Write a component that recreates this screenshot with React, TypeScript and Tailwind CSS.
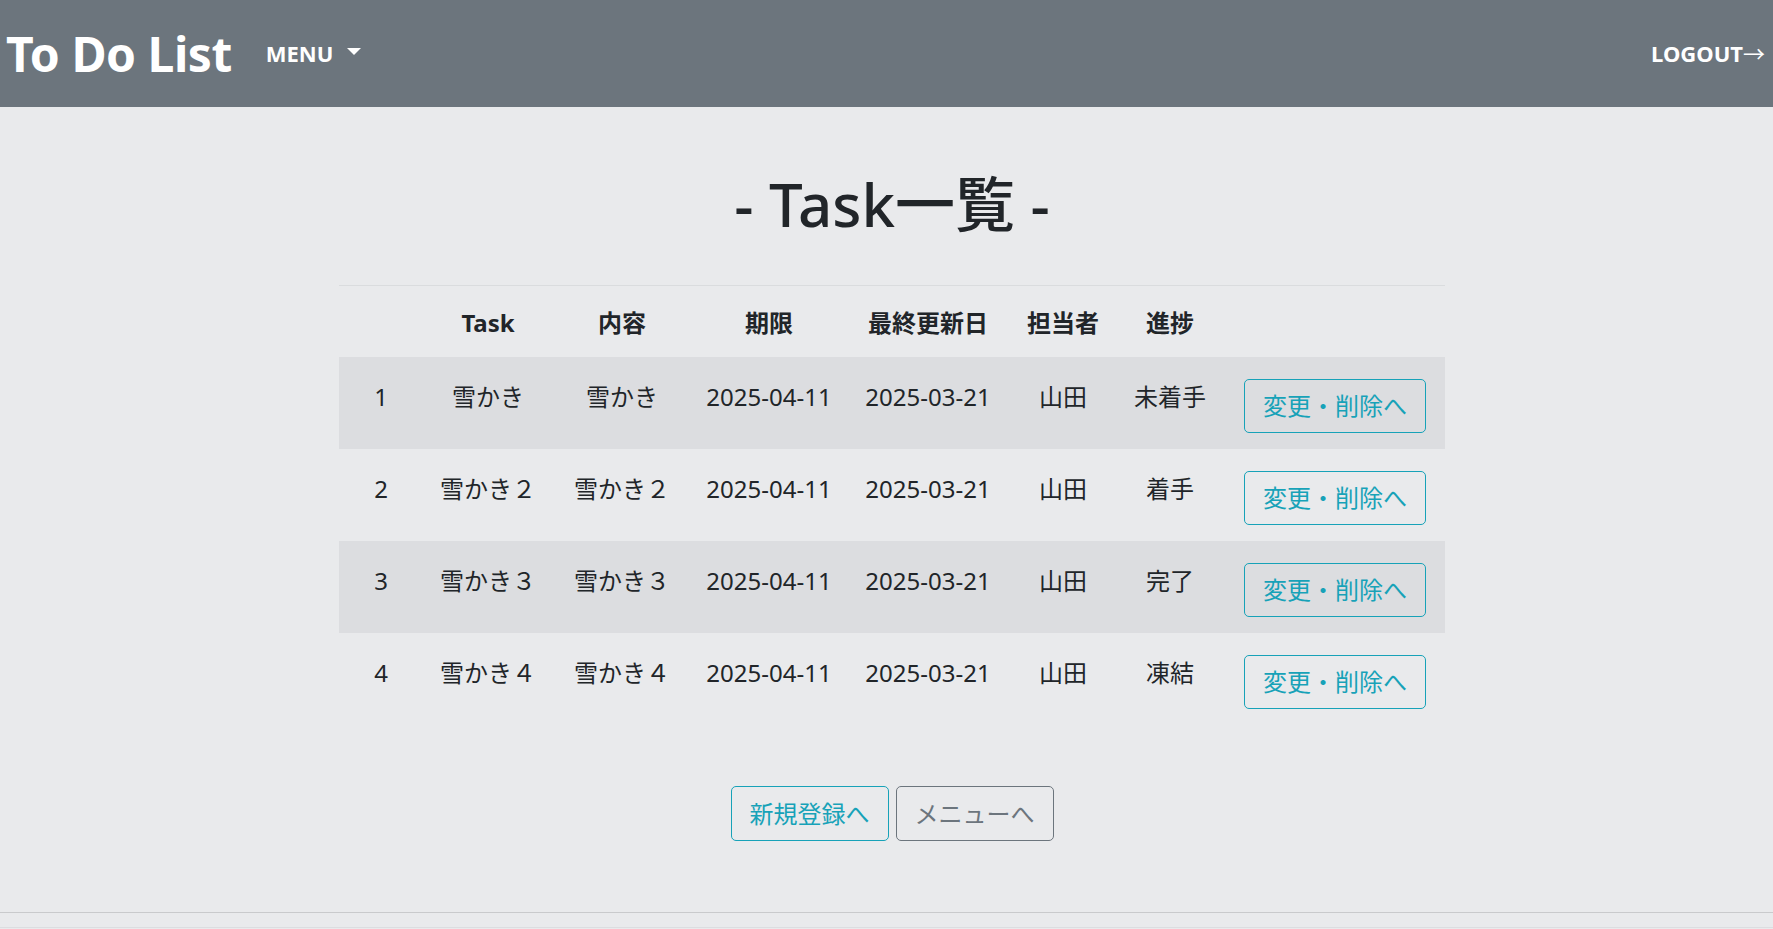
type Task = {
    id: number;
    name: string;
    detail: string;
    due: string;
    updated: string;
    owner: string;
    status: string;
};

const tasks: Task[] = [
    { id: 1, name: "雪かき", detail: "雪かき", due: "2025-04-11", updated: "2025-03-21", owner: "山田", status: "未着手" },
    { id: 2, name: "雪かき２", detail: "雪かき２", due: "2025-04-11", updated: "2025-03-21", owner: "山田", status: "着手" },
    { id: 3, name: "雪かき３", detail: "雪かき３", due: "2025-04-11", updated: "2025-03-21", owner: "山田", status: "完了" },
    { id: 4, name: "雪かき４", detail: "雪かき４", due: "2025-04-11", updated: "2025-03-21", owner: "山田", status: "凍結" },
];

const headers = ["", "Task", "内容", "期限", "最終更新日", "担当者", "進捗", ""];

function Navbar() {
    return (
        <nav className="flex h-[107px] items-center justify-between bg-[#6c757d] pl-[6px] pr-[8px] text-white">
            <div className="flex items-center">
                <span className="text-[48px] font-bold leading-[1.5] tracking-[-0.01em]">To Do List</span>
                <button className="ml-[34px] flex items-center text-[22px] font-bold leading-[1.5]">
                    MENU
                    <span className="ml-[14px] mt-[-4px] h-0 w-0 border-x-[7px] border-t-[7px] border-x-transparent border-t-white" />
                </button>
            </div>
            <a className="text-[22px] font-bold leading-[1.5]">
                LOGOUT<span className="font-normal">→</span>
            </a>
        </nav>
    );
}

function TaskTable() {
    return (
        <table className="mx-auto w-[1106px] table-fixed border-t border-[#dadcde] text-[24px] leading-[36px] text-[#212529]">
            <colgroup>
                <col className="w-[84px]" />
                <col className="w-[130px]" />
                <col className="w-[138px]" />
                <col className="w-[156px]" />
                <col className="w-[162px]" />
                <col className="w-[108px]" />
                <col className="w-[106px]" />
                <col className="w-[222px]" />
            </colgroup>
            <thead>
                <tr>
                    {headers.map((h, i) => (
                        <th key={i} className="h-[71px] pt-[19px] pb-[16px] text-center align-top font-bold whitespace-nowrap">
                            {h}
                        </th>
                    ))}
                </tr>
            </thead>
            <tbody>
                {tasks.map((t, i) => (
                    <tr key={t.id} className={i % 2 === 0 ? "bg-[#dcdde0]" : ""}>
                        {[t.id, t.name, t.detail, t.due, t.updated, t.owner, t.status].map((v, j) => (
                            <td key={j} className="pt-[22px] pb-[16px] text-center align-top whitespace-nowrap">
                                {v}
                            </td>
                        ))}
                        <td className="pt-[22px] pb-[16px] pl-[2px] text-center align-top">
                            <button className="inline-block rounded-[5px] border border-[#17a2b8] px-[18px] py-[8px] text-[#17a2b8] leading-[36px] whitespace-nowrap">
                                変更・削除へ
                            </button>
                        </td>
                    </tr>
                ))}
            </tbody>
        </table>
    );
}

export default function App() {
    return (
        <div className="min-h-screen bg-[#e9eaec] font-['Noto_Sans','Noto_Sans_CJK_JP',sans-serif]">
            <Navbar />
            <main className="pl-[11px]">
                <h1 className="mt-[61px] mb-[45px] text-center text-[60px] font-medium leading-[72px] text-[#212529]">
                    - Task一覧 -
                </h1>
                <TaskTable />
                <div className="mt-[61px] flex justify-center gap-[7px] text-[24px] leading-[36px]">
                    <button className="rounded-[5px] border border-[#17a2b8] px-[18px] py-[8.5px] text-[#17a2b8]">
                        新規登録へ
                    </button>
                    <button className="rounded-[5px] border border-[#6c757d] px-[18px] py-[8.5px] text-[#6c757d]">
                        メニューへ
                    </button>
                </div>
            </main>
            <footer className="mt-[71px] h-[16px] border-y border-t-[#c9cacc] border-b-[#dcdde0]" />
        </div>
    );
}
